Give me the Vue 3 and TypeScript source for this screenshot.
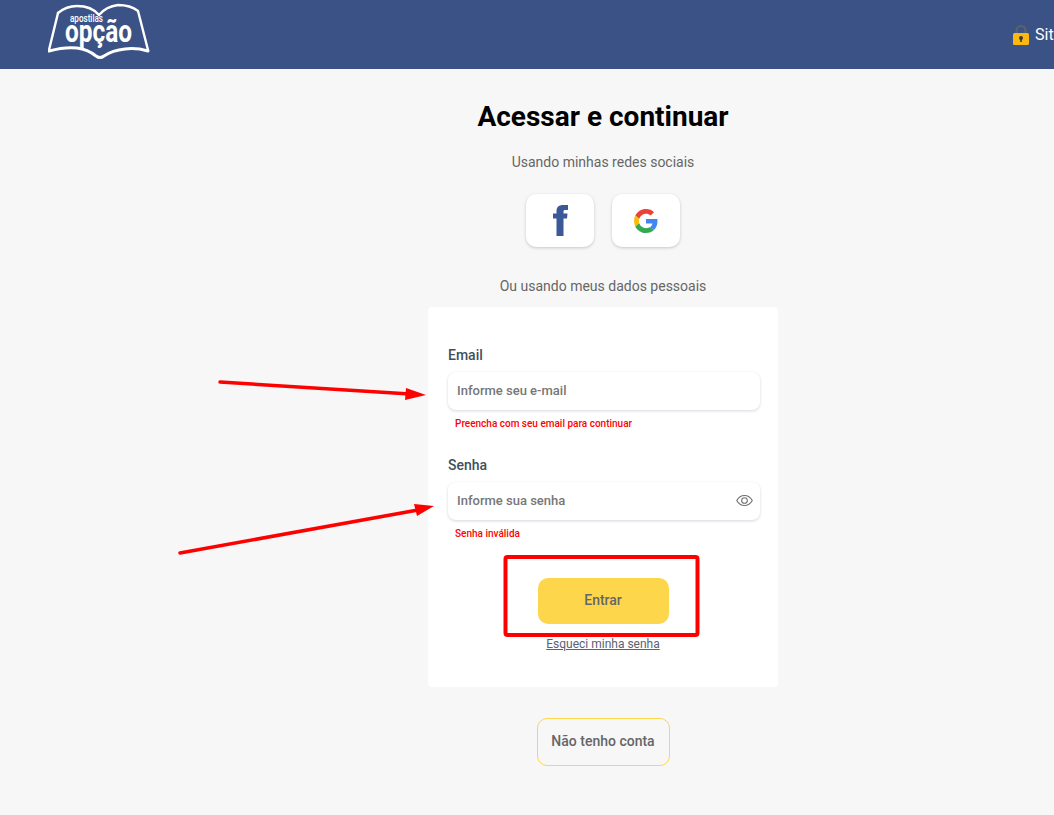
<template>
  <div class="page">
    <header class="topbar">
      <svg class="logo" viewBox="48 0 102 62" width="102" height="62">
        <g fill="none" stroke="#fff" stroke-linejoin="round" stroke-linecap="round">
          <path stroke-width="2.400" d="M58 13C64 8 70 6 77 6C86 6 94 9 99 15C104 9 110 6 118 5C126 5 133 7 138 11L148 50" />
          <path stroke-width="2.400" d="M58 13L49 50" />
          <path stroke-width="3" d="M49 51C60 48 68 47 77 48C85 49 91 52 96 56Q100 59 104 56C110 52 116 50 125 49C133 48 141 49 148 51" />
        </g>
        <text class="logo-small" x="70" y="22" textLength="33" lengthAdjust="spacingAndGlyphs">apostilas</text>
        <text class="logo-big" x="65" y="42" textLength="67" lengthAdjust="spacingAndGlyphs">opção</text>
      </svg>
      <div class="secure">
        <svg class="lock" viewBox="0 0 18 22" width="18" height="22">
          <path d="M4.500 10V6.500a4.500 4.500 0 0 1 9 0V10" fill="none" stroke="#5a626b" stroke-width="2.200" />
          <rect x="1" y="9" width="16" height="12" rx="1.500" fill="#fbb80f" />
          <circle cx="9" cy="14" r="2" fill="#3a3a3a" />
          <rect x="8.200" y="14" width="1.600" height="4" fill="#3a3a3a" />
        </svg>
        <span>Site Seguro</span>
      </div>
    </header>

    <main class="content">
      <h1>Acessar e continuar</h1>
      <p class="hint">Usando minhas redes sociais</p>
      <div class="socials">
        <button class="social" type="button" aria-label="Facebook">
          <svg viewBox="0 0 15 31" width="15" height="31">
            <path fill="#3b5998" d="M3.500 31V13.500H0V8.500H3.500V6C3.500 2 6 0 10 0H15V5H12C11 5 10.500 5.500 10.500 6.500V8.500H14.500L14 13.500H10.500V31Z" />
          </svg>
        </button>
        <button class="social" type="button" aria-label="Google">
          <svg viewBox="0 0 48 48" width="24" height="24">
            <path fill="#EA4335" d="M24 9.500c3.540 0 6.710 1.220 9.210 3.600l6.850-6.850C35.900 2.380 30.470 0 24 0 14.620 0 6.510 5.380 2.560 13.220l7.980 6.190C12.430 13.720 17.740 9.500 24 9.500z" />
            <path fill="#4285F4" d="M46.980 24.550c0-1.570-.15-3.090-.38-4.550H24v9.020h12.940c-.58 2.960-2.260 5.480-4.780 7.180l7.730 6c4.510-4.180 7.090-10.360 7.090-17.650z" />
            <path fill="#FBBC05" d="M10.530 28.590c-.48-1.450-.76-2.990-.76-4.590s.27-3.140.76-4.590l-7.980-6.190C.92 16.460 0 20.120 0 24c0 3.880.92 7.540 2.560 10.780l7.970-6.190z" />
            <path fill="#34A853" d="M24 48c6.480 0 11.930-2.130 15.890-5.810l-7.730-6c-2.150 1.450-4.920 2.300-8.160 2.300-6.260 0-11.570-4.220-13.470-9.910l-7.980 6.190C6.510 42.620 14.620 48 24 48z" />
          </svg>
        </button>
      </div>
      <p class="hint hint-data">Ou usando meus dados pessoais</p>

      <form class="card" @submit.prevent>
        <label class="label" for="email">Email</label>
        <div class="field">
          <input id="email" v-model="email" type="email" placeholder="Informe seu e-mail" />
        </div>
        <p class="error">Preencha com seu email para continuar</p>

        <label class="label label-senha" for="senha">Senha</label>
        <div class="field">
          <input id="senha" v-model="senha" type="password" placeholder="Informe sua senha" />
          <svg class="eye" viewBox="0 0 24 24" width="17" height="17" fill="none" stroke="#6f6f6f" stroke-width="1.500">
            <path d="M1 12s4-7 11-7 11 7 11 7-4 7-11 7S1 12 1 12z" />
            <circle cx="12" cy="12" r="4" />
          </svg>
        </div>
        <p class="error">Senha inválida</p>

        <button class="submit" type="submit">Entrar</button>
        <a class="forgot" href="#">Esqueci minha senha</a>
      </form>

      <button class="no-account" type="button">Não tenho conta</button>
    </main>

    <!-- marcações vermelhas feitas por cima do print -->
    <svg class="marks" viewBox="0 0 1054 815" width="1054" height="815">
      <line x1="220" y1="382" x2="410" y2="394" stroke="#f00" stroke-width="3.500" stroke-linecap="round" />
      <polygon points="426,395 406,388 405,400" fill="#f00" />
      <line x1="180" y1="553" x2="418" y2="510" stroke="#f00" stroke-width="3.500" stroke-linecap="round" />
      <polygon points="434,506 414,504 417,516" fill="#f00" />
      <rect x="505.500" y="557" width="192" height="78" rx="2" fill="none" stroke="#f00" stroke-width="4" />
    </svg>
  </div>
</template>

<script setup lang="ts">
import { ref } from "vue";

const email = ref("");
const senha = ref("");
</script>

<style>
html,
body {
  margin: 0;
  overflow: hidden;
  background: #f7f7f7;
}
</style>

<style scoped>
.page {
  position: relative;
  height: 815px;
  overflow: hidden;
  background: #f7f7f7;
  font-family: Roboto, "Liberation Sans", sans-serif;
  color: #666;
}

.topbar {
  display: flex;
  align-items: center;
  justify-content: space-between;
  height: 69px;
  padding-left: 48px;
  background: #3b5286;
}

.logo {
  align-self: flex-start;
  flex: none;
}

.logo-small {
  font-size: 10.500px;
  font-weight: 500;
  fill: #fff;
}

.logo-big {
  font-size: 32px;
  font-weight: 700;
  fill: #fff;
}

.secure {
  display: flex;
  align-items: center;
  gap: 5px;
  width: 42px;
  flex: none;
  color: #fff;
  font-size: 16px;
  white-space: nowrap;
}

.lock {
  flex: none;
}

.content {
  display: flex;
  flex-direction: column;
  align-items: center;
  padding-left: 152px;
}

h1 {
  margin: 31px 0 0;
  color: #000;
  font-size: 28px;
  line-height: 33px;
  font-weight: 700;
}

.hint {
  margin: 19px 0 0;
  font-size: 14px;
  line-height: 20px;
}

.socials {
  display: flex;
  gap: 18px;
  margin-top: 22px;
}

.social {
  display: flex;
  align-items: center;
  justify-content: center;
  width: 68px;
  height: 53px;
  padding: 0;
  border: 0;
  border-radius: 10px;
  background: #fff;
  box-shadow: 0 1px 3px rgba(50, 50, 93, 0.25);
}

.hint-data {
  margin-top: 29px;
}

.card {
  display: flex;
  flex-direction: column;
  box-sizing: border-box;
  width: 350px;
  height: 380px;
  margin-top: 11px;
  padding: 40px 18px 0 20px;
  border-radius: 4px;
  background: #fff;
}

.label {
  font-size: 14px;
  line-height: 16px;
  font-weight: 500;
  color: #3f4f5c;
}

.label-senha {
  margin-top: 27px;
}

.field {
  position: relative;
  margin-top: 9px;
}

.field input {
  display: block;
  box-sizing: border-box;
  width: 100%;
  height: 38px;
  padding: 0 36px 2px 9px;
  border: 0;
  outline: 0;
  border-radius: 8px;
  background: #fff;
  box-shadow: 0 1px 3px rgba(50, 50, 93, 0.2);
  font: 500 13px Roboto, "Liberation Sans", sans-serif;
}

.field input::placeholder {
  color: #777;
  opacity: 1;
}

.eye {
  position: absolute;
  right: 7px;
  top: 10px;
}

.error {
  margin: 8px 0 0 7px;
  font-size: 10px;
  line-height: 12px;
  font-weight: 500;
  color: #f00;
}

.submit {
  align-self: center;
  width: 131px;
  height: 46px;
  margin: 38px 2px 0 0;
  padding: 0 0 2px;
  border: 0;
  border-radius: 10px;
  background: #fdd64b;
  color: #666;
  font: 500 14px Roboto, "Liberation Sans", sans-serif;
}

.forgot {
  align-self: center;
  margin: 12px 2px 0 0;
  font-size: 12px;
  line-height: 16px;
  color: #5b6272;
}

.no-account {
  width: 133px;
  height: 48px;
  margin-top: 31px;
  padding: 0 0 2px;
  border: 1px solid #fdd64b;
  border-radius: 10px;
  background: transparent;
  color: #666;
  font: 500 14px Roboto, "Liberation Sans", sans-serif;
}

.marks {
  position: absolute;
  left: 0;
  top: 0;
  pointer-events: none;
}
</style>
